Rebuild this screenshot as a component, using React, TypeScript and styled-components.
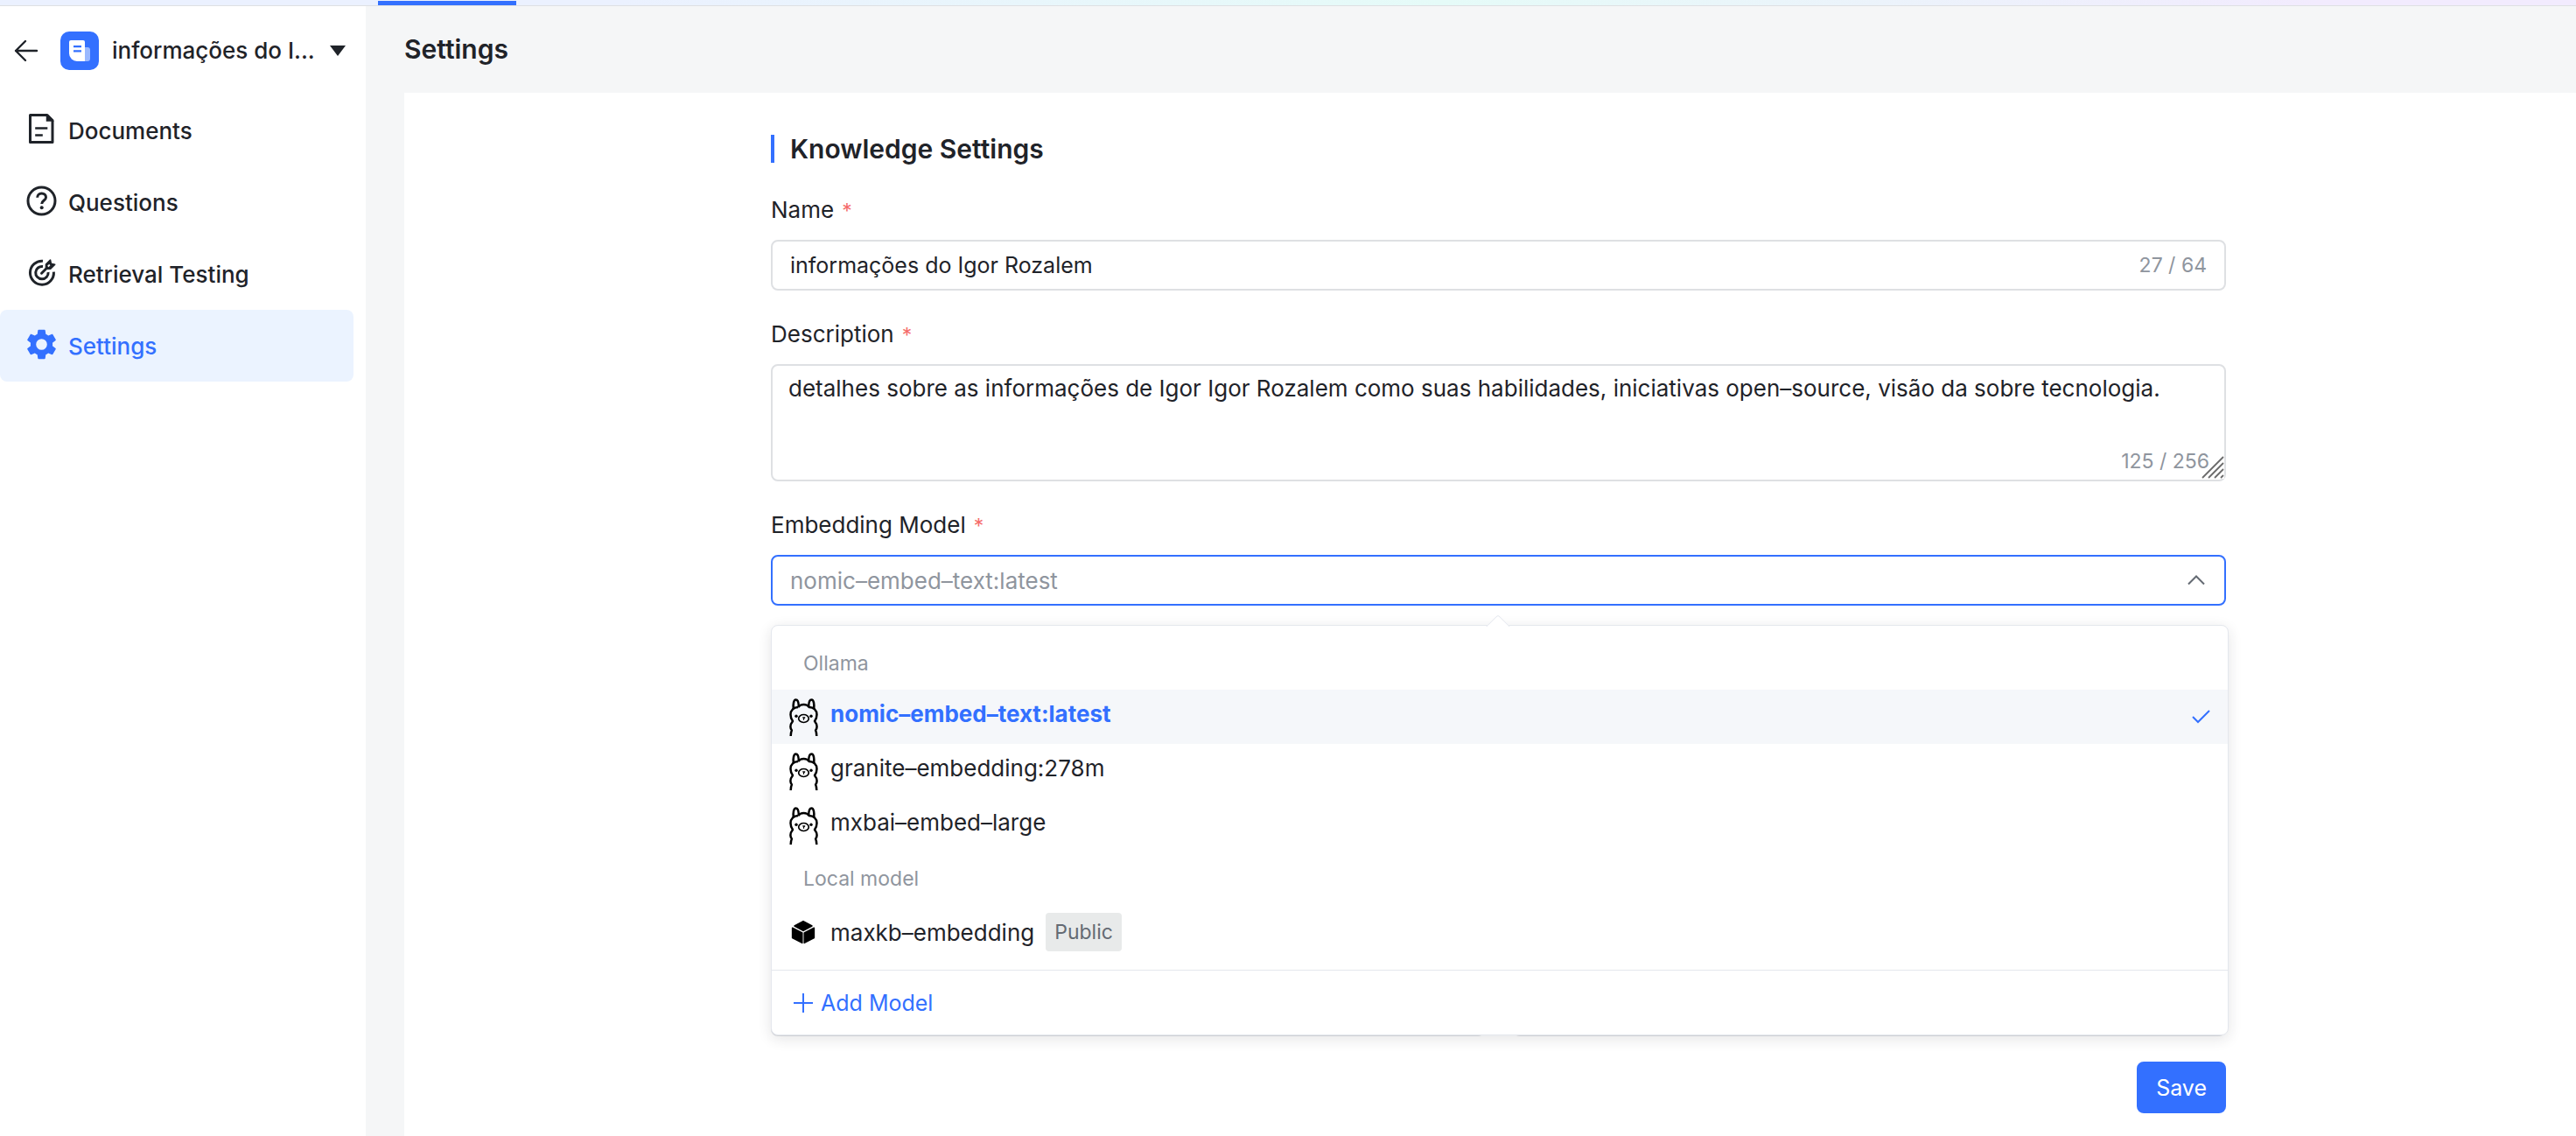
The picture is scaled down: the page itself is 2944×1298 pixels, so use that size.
import React from "react";
import styled, { createGlobalStyle, css } from "styled-components";

const ink = "#1f2329";
const muted = "#8f959e";
const primary = "#3370ff";
const line = "#dee0e3";

const GlobalStyle = createGlobalStyle`
  *, *::before, *::after { box-sizing: border-box; }
  body {
    margin: 0;
    color: ${ink};
    background: #f5f6f7;
    font-family: Inter, "Noto Sans", sans-serif;
    font-size: 26px;
  }
  button, input, select, textarea { font: inherit; color: inherit; margin: 0; }
`;

const Page = styled.div`
  display: flex;
  flex-direction: column;
  min-height: 100vh;
`;

const TopBar = styled.header`
  display: flex;
  align-items: flex-end;
  height: 7px;
  padding-left: 432px;
  border-bottom: 1px solid ${line};
  background: linear-gradient(90deg, #ebf1ff 24%, #e5fbf8 56%, #f2ebfe 90%);
`;

const ActiveTab = styled.span`
  width: 158px;
  height: 5px;
  background: ${primary};
`;

const Body = styled.div`
  display: flex;
  flex: 1;
`;

const Sidebar = styled.aside`
  flex: 0 0 418px;
  padding-right: 14px;
  background: #fff;
`;

const KnowledgeBar = styled.div`
  display: flex;
  align-items: center;
  height: 101px;
  padding-left: 15px;
`;

const BackButton = styled.button`
  display: flex;
  padding: 0;
  border: 0;
  background: none;
`;

const SwitchButton = styled.button`
  display: flex;
  flex: 1;
  align-items: center;
  margin-left: 24px;
  padding: 0;
  border: 0;
  background: none;
  font-weight: 500;
`;

const SwitchName = styled.span`
  flex: 1;
  margin-left: 15px;
  text-align: left;
  white-space: nowrap;
`;

const CaretIcon = styled.svg`
  margin-right: 9px;
`;

const NavList = styled.ul`
  margin: 0;
  padding: 0;
  list-style: none;
`;

const NavLink = styled.a<{ $active?: boolean }>`
  display: flex;
  align-items: center;
  gap: 13px;
  height: 82px;
  padding-left: 30px;
  border-radius: 8px;
  color: ${(p) => (p.$active ? primary : ink)};
  background: ${(p) => (p.$active ? "#ebf3ff" : "transparent")};
  font-weight: 500;
  text-decoration: none;

  svg { margin-bottom: 4px; }
`;

const Main = styled.main`
  display: flex;
  flex: 1;
  flex-direction: column;
  padding-left: 44px;
`;

const PageTitle = styled.h1`
  margin: 0;
  font-size: 30px;
  font-weight: 600;
  line-height: 99px;
`;

const Panel = styled.section`
  display: grid;
  flex: 1;
  grid-template-columns: 419fr 1663fr 400fr;
  padding: 48px 0 26px;
  background: #fff;
`;

const Form = styled.form`
  grid-column: 2;
`;

const SectionTitle = styled.h2`
  margin: 0 0 32px;
  padding-left: 18px;
  border-left: 4px solid ${primary};
  font-size: 30px;
  font-weight: 600;
  line-height: 32px;
`;

const Field = styled.div`
  display: flex;
  flex-direction: column;
  margin-bottom: 28px;
`;

const Label = styled.label`
  margin-bottom: 12px;
  line-height: 44px;
`;

const Required = styled.span`
  margin-left: 9px;
  color: #f56c6c;
  font-size: 23px;
  line-height: 1;
`;

const Control = styled.div`
  position: relative;
  display: flex;
`;

const box = css`
  width: 100%;
  border: 2px solid ${line};
  border-radius: 8px;
  outline: 0;
  background: #fff;
`;

const TextInput = styled.input`
  ${box}
  height: 58px;
  padding: 0 120px 0 20px;
  font-size: 25px;
`;

const TextArea = styled.textarea`
  ${box}
  display: block;
  height: 134px;
  padding: 5px 18px;
  line-height: 42px;
  resize: none;
`;

const Select = styled.select`
  ${box}
  height: 58px;
  padding: 0 60px 0 20px;
  border-color: ${primary};
  color: ${muted};
  appearance: none;
`;

const Count = styled.span<{ $corner?: boolean }>`
  position: absolute;
  right: ${(p) => (p.$corner ? 19 : 22)}px;
  bottom: ${(p) => (p.$corner ? 5 : 11)}px;
  color: ${muted};
  font-size: 23px;
  line-height: 36px;
`;

const ResizeGrip = styled.svg`
  position: absolute;
  right: 2px;
  bottom: 3px;
`;

const Chevron = styled.svg`
  position: absolute;
  top: 23px;
  right: 24px;
`;

const Popup = styled.div`
  position: absolute;
  z-index: 1;
  top: calc(100% + 22px);
  right: -3px;
  left: 0;
  border: 1px solid #e4e7ed;
  border-radius: 8px;
  background: #fff;
  box-shadow: 0 4px 16px rgba(31, 35, 41, 0.12);
`;

const PopupArrow = styled.span`
  position: absolute;
  top: -9px;
  left: calc(50% - 12px);
  width: 20px;
  height: 20px;
  border: 1px solid #e4e7ed;
  border-right-color: transparent;
  border-bottom-color: transparent;
  border-radius: 4px 0 0 0;
  background: #fff;
  transform: rotate(45deg);
`;

const OptionList = styled.div`
  position: relative;
  padding: 13px 0 12px;
`;

const GroupName = styled.div`
  padding-left: 36px;
  color: ${muted};
  font-size: 23px;
  line-height: 60px;
`;

const Option = styled.div<{ $selected?: boolean }>`
  display: flex;
  align-items: center;
  height: 62px;
  padding: 0 20px 0 19px;
  color: ${(p) => (p.$selected ? primary : ink)};
  background: ${(p) => (p.$selected ? "#f5f7fa" : "transparent")};
  font-weight: ${(p) => (p.$selected ? 700 : 400)};
`;

const OptionLogo = styled.span`
  display: flex;
  justify-content: center;
  width: 34px;
  margin-right: 14px;
`;

const OptionName = styled.span<{ $raised?: boolean }>`
  padding-bottom: ${(p) => (p.$raised ? 8 : 0)}px;
`;

const Tag = styled.span`
  margin-left: 13px;
  padding: 0 10px;
  border-radius: 4px;
  color: #646a73;
  background: #e8eaea;
  font-size: 23px;
  line-height: 44px;
`;

const CheckIcon = styled.svg`
  margin-left: auto;
`;

const PopupFooter = styled.div`
  border-top: 1px solid #e4e7ed;
`;

const AddButton = styled.button`
  display: flex;
  align-items: center;
  gap: 9px;
  width: 100%;
  height: 73px;
  padding: 0 25px;
  border: 0;
  background: none;
  color: ${primary};
  font-size: 25px;
`;

const TypeCards = styled.div`
  display: grid;
  grid-template-columns: 1fr 1fr;
  gap: 32px;
  margin: 120px 0 29px;
`;

const TypeCard = styled.div`
  height: 372px;
  border: 2px solid ${line};
  border-radius: 8px;
`;

const Actions = styled.div`
  display: flex;
  justify-content: flex-end;
`;

const SaveButton = styled.button`
  height: 59px;
  padding: 0 22px;
  border: 0;
  border-radius: 8px;
  color: #fff;
  background: ${primary};
  font-size: 25px;
`;

const BackIcon = () => (
  <svg width="30" height="30" viewBox="0 0 30 30" fill="none" stroke={ink} strokeWidth="2.4" strokeLinecap="round" strokeLinejoin="round">
    <path d="M27 15H3M14 4 3 15l11 11" />
  </svg>
);

const KnowledgeLogo = () => (
  <svg width="44" height="44" viewBox="0 0 44 44">
    <rect width="44" height="44" rx="10" fill={primary} />
    <path d="M28 18h3a3 3 0 0 1 3 3v10a3 3 0 0 1-3 3h-4z" fill="#fff" opacity=".5" />
    <path d="M12 10h14a2 2 0 0 1 2 2v22h-9a9 9 0 0 1-9-9V12a2 2 0 0 1 2-2z" fill="#fff" />
    <path d="M15 17.2h9M15 22.4h9" stroke={primary} strokeWidth="2.2" />
  </svg>
);

const DocumentIcon = () => (
  <svg width="35" height="36" viewBox="0 0 35 36" fill="none" stroke={ink} strokeWidth="3">
    <path d="M4.500 2.500H24L30 8.500V33.500H4.500z" strokeLinejoin="round" />
    <path d="M23.500 2.500V9H30z" fill={ink} strokeWidth="1.500" />
    <path d="M11.500 17.500H23M11.500 25.500H17.500" strokeLinecap="square" strokeWidth="2.600" />
  </svg>
);

const QuestionIcon = () => (
  <svg width="35" height="35" viewBox="0 0 35 35" fill="none" stroke={ink} strokeWidth="3">
    <circle cx="17.500" cy="17.500" r="15.500" />
    <path d="M12.700 13.800c0-3 2.100-4.800 4.900-4.800s4.900 1.800 4.900 4.400c0 3.600-4.800 3.700-4.800 7.600" />
    <circle cx="17.700" cy="25.300" r="2" fill={ink} stroke="none" />
  </svg>
);

const TargetIcon = () => (
  <svg width="35" height="35" viewBox="0 0 35 35" fill="none" stroke={ink} strokeWidth="3">
    <path d="M19 4.200A13.500 13.500 0 1 0 31.400 16.600" />
    <path d="M19 10.500a7.200 7.200 0 1 0 6.100 6.500" />
    <path d="M17.500 18.200 26 9.700" strokeLinecap="round" />
    <path d="M22.500 12.800V8l5-5 .9 4.300 4.300.9-5 5h-5z" fill={ink} strokeWidth="1.600" strokeLinejoin="round" />
    <path d="m24.800 10.500 2-2" stroke="#fff" strokeWidth="1.800" />
  </svg>
);

const GearIcon = () => (
  <svg width="35" height="35" viewBox="2 2 20 20" fill={primary}>
    <path d="M19.140 12.940c.04-.3.06-.61.06-.94 0-.32-.02-.64-.07-.94l2.030-1.580c.18-.14.23-.41.12-.61l-1.920-3.320c-.12-.22-.37-.29-.59-.22l-2.390.96c-.5-.38-1.030-.7-1.620-.94l-.36-2.540c-.04-.24-.24-.41-.48-.41h-3.840c-.24 0-.43.17-.47.41l-.36 2.540c-.59.24-1.130.57-1.620.94l-2.390-.96c-.22-.08-.47 0-.59.22L2.740 8.870c-.12.21-.08.47.12.61l2.030 1.580c-.05.3-.09.63-.09.94s.02.64.07.94l-2.030 1.580c-.18.14-.23.41-.12.61l1.920 3.320c.12.22.37.29.59.22l2.390-.96c.5.38 1.030.7 1.620.94l.36 2.540c.05.24.24.41.48.41h3.840c.24 0 .44-.17.47-.41l.36-2.540c.59-.24 1.130-.56 1.620-.94l2.390.96c.22.08.47 0 .59-.22l1.920-3.320c.12-.22.07-.47-.12-.61l-2.010-1.580zM12 15.600a3.600 3.600 0 1 1 0-7.200 3.600 3.600 0 0 1 0 7.200z" />
  </svg>
);

const OllamaLogo = () => (
  <svg width="33" height="43" viewBox="0 0 33 43" fill="none" stroke="#000" strokeWidth="2.500" strokeLinejoin="round">
    <path d="M4.800 12C4.200 7 5 1.500 7.500 1.500c2.300 0 3.300 3.500 3.300 8" />
    <path d="M28.200 12C28.800 7 28 1.500 25.500 1.500c-2.300 0-3.300 3.500-3.300 8" />
    <path d="M10.200 10c1.200-1.800 3.500-3 6.300-3s5.100 1.200 6.300 3c5 0 8.700 3.600 8.700 8.500 0 3-1 5.500-2.500 7.500 1.800 2.200 2.600 4.200 2.600 6.300 0 1.700-.5 3-1.500 4.200.9 1.700 1.200 3.800 1.200 6.500M10.200 10c-5 0-8.700 3.600-8.700 8.500 0 3 1 5.500 2.500 7.500-1.800 2.200-2.600 4.200-2.600 6.300 0 1.700.5 3 1.500 4.200-.9 1.700-1.200 3.800-1.200 6.500" />
    <ellipse cx="16.500" cy="23" rx="5.800" ry="4.500" strokeWidth="1.700" />
    <path d="M15.200 21.800h2.600l-1.300 1.400v1.600" strokeWidth="1.200" />
    <circle cx="8" cy="20.300" r="1.700" fill="#000" stroke="none" />
    <circle cx="25" cy="20.300" r="1.700" fill="#000" stroke="none" />
  </svg>
);

const CubeLogo = () => (
  <svg width="28" height="28" viewBox="0 0 28 28" fill="#000" stroke="#000" strokeWidth="1.500" strokeLinejoin="round">
    <path d="M14 1.600 24 7 14 12.400 4 7z" />
    <path d="M1.600 9.200 12.800 15V26.400L1.600 20.600zM26.400 9.200 15.200 15V26.400l11.200-5.800z" />
  </svg>
);

const nav = [
  { name: "Documents", icon: <DocumentIcon /> },
  { name: "Questions", icon: <QuestionIcon /> },
  { name: "Retrieval Testing", icon: <TargetIcon /> },
  { name: "Settings", icon: <GearIcon />, active: true },
];

const ollamaModels = ["nomic–embed–text:latest", "granite–embedding:278m", "mxbai–embed–large"];
const selectedModel = ollamaModels[0];

export default function App() {
  return (
    <Page>
      <GlobalStyle />
      <TopBar>
        <ActiveTab />
      </TopBar>
      <Body>
        <Sidebar>
          <KnowledgeBar>
            <BackButton type="button" aria-label="Back">
              <BackIcon />
            </BackButton>
            <SwitchButton type="button">
              <KnowledgeLogo />
              <SwitchName>informações do I...</SwitchName>
              <CaretIcon width="18" height="12" viewBox="0 0 18 12" fill={ink}>
                <path d="M0 0h18L9 12z" />
              </CaretIcon>
            </SwitchButton>
          </KnowledgeBar>
          <nav>
            <NavList>
              {nav.map((item) => (
                <li key={item.name}>
                  <NavLink href="#" $active={item.active}>
                    {item.icon}
                    {item.name}
                  </NavLink>
                </li>
              ))}
            </NavList>
          </nav>
        </Sidebar>
        <Main>
          <PageTitle>Settings</PageTitle>
          <Panel>
            <Form>
              <SectionTitle>Knowledge Settings</SectionTitle>
              <Field>
                <Label htmlFor="name">
                  Name<Required>*</Required>
                </Label>
                <Control>
                  <TextInput id="name" defaultValue="informações do Igor Rozalem" />
                  <Count>27 / 64</Count>
                </Control>
              </Field>
              <Field>
                <Label htmlFor="description">
                  Description<Required>*</Required>
                </Label>
                <Control>
                  <TextArea
                    id="description"
                    spellCheck={false}
                    defaultValue="detalhes sobre as informações de Igor Igor Rozalem como suas habilidades, iniciativas open–source, visão da sobre tecnologia."
                  />
                  <Count $corner>125 / 256</Count>
                  <ResizeGrip width="26" height="26" viewBox="0 0 26 26" fill="none">
                    <path d="M4 26 26 4V26z" fill="#fff" />
                    <path d="M1 25 25 1M8 25 25 8M15 25 25 15M22 25 25 22" stroke="#6b6b6b" strokeWidth="1.800" />
                  </ResizeGrip>
                </Control>
              </Field>
              <Field>
                <Label htmlFor="model">
                  Embedding Model<Required>*</Required>
                </Label>
                <Control>
                  <Select id="model" defaultValue={selectedModel}>
                    {ollamaModels.map((m) => (
                      <option key={m}>{m}</option>
                    ))}
                    <option>maxkb–embedding</option>
                  </Select>
                  <Chevron width="20" height="12" viewBox="0 0 20 12" fill="none" stroke="#646a73" strokeWidth="2">
                    <path d="m1 10.500 9-9 9 9" />
                  </Chevron>
                  <Popup>
                    <PopupArrow />
                    <OptionList role="listbox" aria-label="Embedding Model">
                      <GroupName>Ollama</GroupName>
                      {ollamaModels.map((m) => (
                        <Option key={m} role="option" aria-selected={m === selectedModel} $selected={m === selectedModel}>
                          <OptionLogo>
                            <OllamaLogo />
                          </OptionLogo>
                          <OptionName $raised>{m}</OptionName>
                          {m === selectedModel && (
                            <CheckIcon width="21" height="16" viewBox="0 0 21 16" fill="none" stroke={primary} strokeWidth="2">
                              <path d="m1 8 6 6L20 1" />
                            </CheckIcon>
                          )}
                        </Option>
                      ))}
                      <GroupName>Local model</GroupName>
                      <Option role="option" aria-selected={false}>
                        <OptionLogo>
                          <CubeLogo />
                        </OptionLogo>
                        <OptionName>maxkb–embedding</OptionName>
                        <Tag>Public</Tag>
                      </Option>
                    </OptionList>
                    <PopupFooter>
                      <AddButton type="button">
                        <svg width="22" height="22" viewBox="0 0 22 22" stroke={primary} strokeWidth="2">
                          <path d="M11 0v22M0 11h22" />
                        </svg>
                        Add Model
                      </AddButton>
                    </PopupFooter>
                  </Popup>
                </Control>
              </Field>
              <TypeCards>
                <TypeCard />
                <TypeCard />
              </TypeCards>
              <Actions>
                <SaveButton type="button">Save</SaveButton>
              </Actions>
            </Form>
          </Panel>
        </Main>
      </Body>
    </Page>
  );
}
